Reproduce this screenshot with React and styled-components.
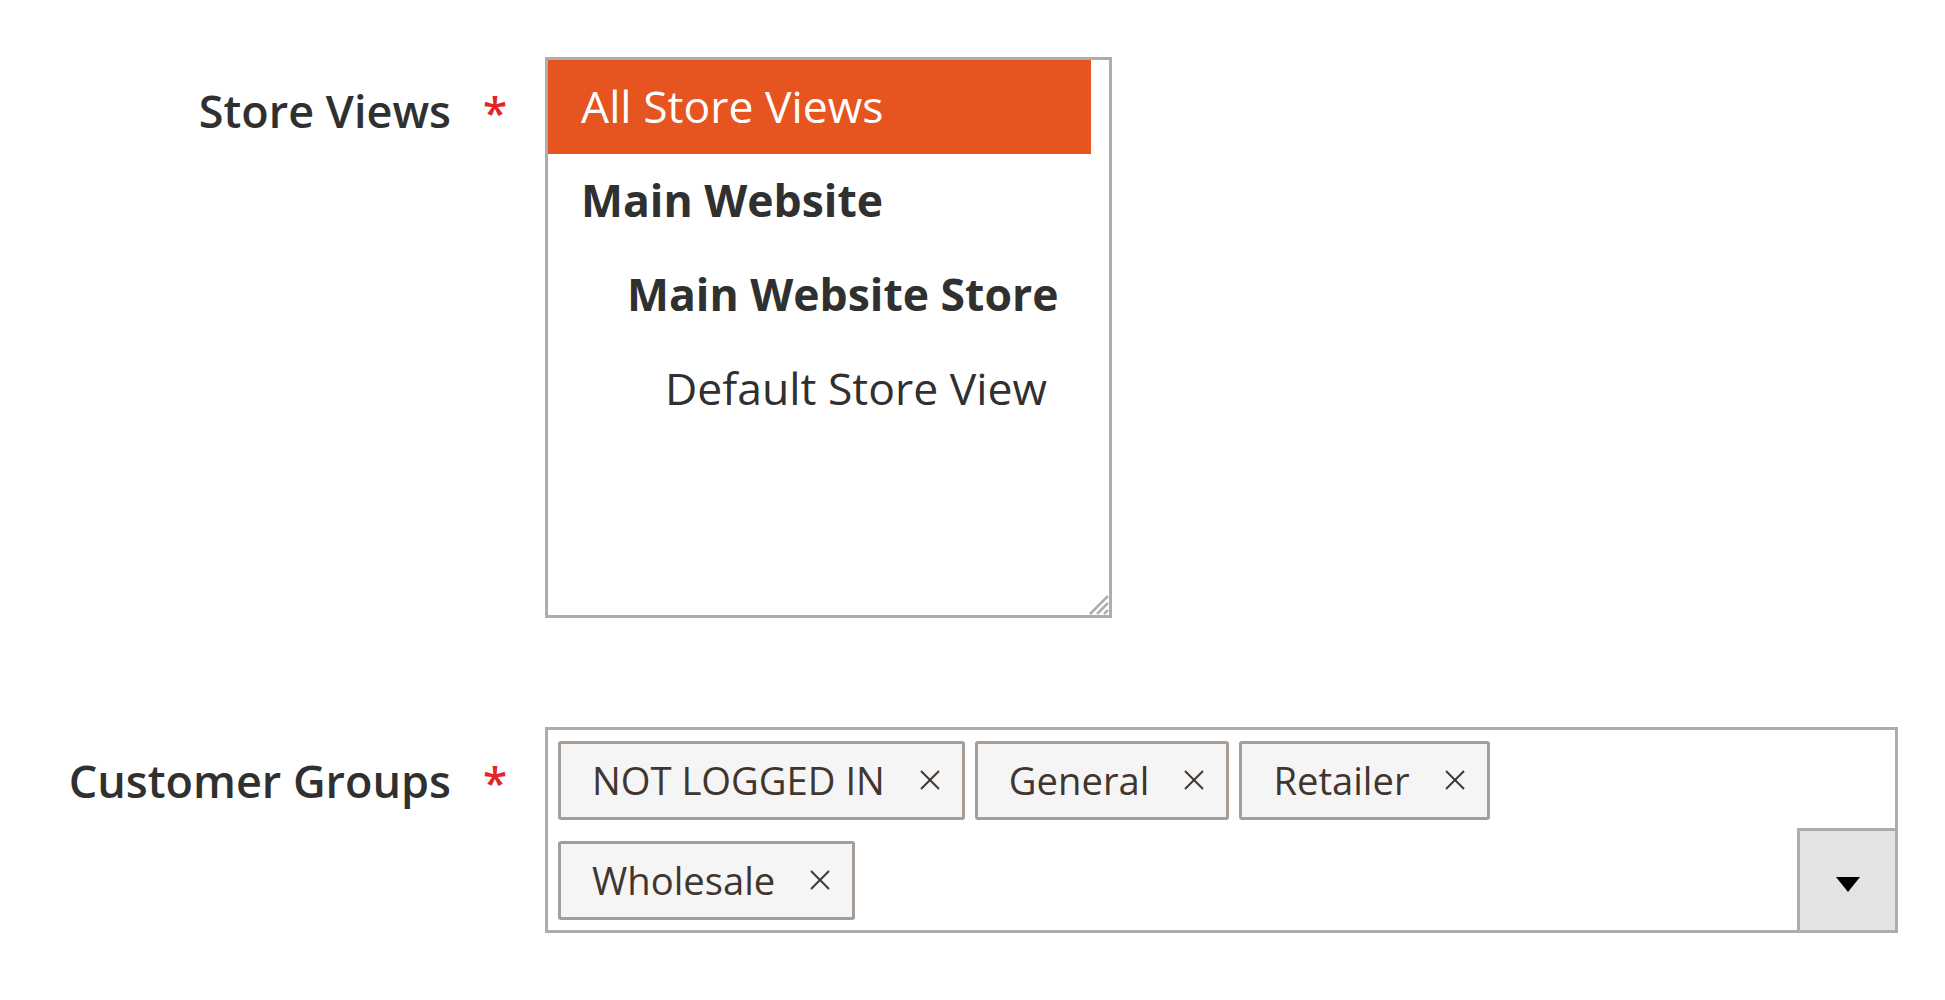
import React from "react";
import styled, { createGlobalStyle } from "styled-components";

const GlobalStyle = createGlobalStyle`
  html, body {
    margin: 0;
    padding: 0;
    background: #fff;
  }
  body {
    font-family: "Open Sans", "Liberation Sans", sans-serif;
    color: #303030;
  }
`;

const storeOptions = [
  { id: 0, label: "All Store Views", indent: 0, weight: 400, selected: true },
  { id: 1, label: "Main Website", indent: 0, weight: 700 },
  { id: 2, label: "Main Website Store", indent: 46, weight: 700 },
  { id: 3, label: "Default Store View", indent: 84, weight: 400 },
];

const groups = ["NOT LOGGED IN", "General", "Retailer", "Wholesale"];

export default function App() {
  return (
    <>
      <GlobalStyle />
      <Form>
        <Field>
          <Label>Store Views</Label>
          <Required>*</Required>
          <Control>
            <ListBox>
              {storeOptions.map((opt) => (
                <Option
                  key={opt.id}
                  $indent={opt.indent}
                  $weight={opt.weight}
                  $selected={opt.selected}
                >
                  {opt.label}
                </Option>
              ))}
              <ResizeHandle viewBox="0 0 22 22">
                <line x1="21" y1="3" x2="3" y2="21" />
                <line x1="21" y1="10" x2="10" y2="21" />
                <line x1="21" y1="17" x2="17" y2="21" />
              </ResizeHandle>
            </ListBox>
          </Control>
        </Field>

        <Field $spaced>
          <Label>Customer Groups</Label>
          <Required>*</Required>
          <Control>
            <MultiSelect>
              {groups.map((g) => (
                <Crumb key={g}>
                  <span>{g}</span>
                  <RemoveIcon viewBox="0 0 20 20">
                    <line x1="1" y1="1" x2="19" y2="19" />
                    <line x1="19" y1="1" x2="1" y2="19" />
                  </RemoveIcon>
                </Crumb>
              ))}
              <Toggle>
                <Caret />
              </Toggle>
            </MultiSelect>
          </Control>
        </Field>
      </Form>
    </>
  );
}

const Form = styled.div`
  padding-top: 57px;
`;

const Field = styled.div`
  display: flex;
  align-items: flex-start;
  margin-top: ${(p) => (p.$spaced ? "109px" : "0")};
`;

const Label = styled.div`
  width: 451px;
  flex-shrink: 0;
  text-align: right;
  font-size: 45px;
  font-weight: 600;
  line-height: 60px;
  padding-top: 24px;
  color: #303030;
  white-space: nowrap;
`;

const Required = styled.div`
  width: 24px;
  margin-left: 32px;
  font-size: 44px;
  font-weight: 600;
  line-height: 60px;
  padding-top: 25px;
  color: #e22626;
`;

const Control = styled.div`
  margin-left: 38px;
`;

const ListBox = styled.div`
  position: relative;
  box-sizing: border-box;
  width: 567px;
  height: 561px;
  border: 3px solid #adadad;
  padding-right: 18px;
  background: #fff;
`;

const Option = styled.div`
  height: 94px;
  line-height: 91px;
  font-size: 44.5px;
  padding-left: ${(p) => 33 + p.$indent}px;
  font-weight: ${(p) => p.$weight};
  color: ${(p) => (p.$selected ? "#fff" : "#303030")};
  background: ${(p) => (p.$selected ? "#e6541f" : "transparent")};
  white-space: nowrap;
`;

const ResizeHandle = styled.svg`
  position: absolute;
  right: 0;
  bottom: 0;
  width: 22px;
  height: 22px;
  stroke: #adadad;
  stroke-width: 2.5;
`;

const MultiSelect = styled.div`
  position: relative;
  box-sizing: border-box;
  width: 1353px;
  height: 206px;
  border: 3px solid #adadad;
  padding: 11px 110px 0 10px;
  display: flex;
  flex-wrap: wrap;
  align-content: flex-start;
  column-gap: 10px;
  row-gap: 21px;
  background: #fff;
`;

const Crumb = styled.div`
  box-sizing: border-box;
  height: 79px;
  display: flex;
  align-items: center;
  gap: 35px;
  padding: 0 22px 2px 31px;
  border: 3px solid #a79d95;
  border-radius: 3px;
  background: #f5f5f5;
  color: #41362f;
  font-size: 38.2px;
  white-space: nowrap;
`;

const RemoveIcon = styled.svg`
  width: 20px;
  height: 20px;
  stroke: #41362f;
  stroke-width: 2;
  flex-shrink: 0;
`;

const Toggle = styled.div`
  position: absolute;
  right: -3px;
  bottom: -3px;
  box-sizing: border-box;
  width: 101px;
  height: 105px;
  border: 3px solid #adadad;
  background: #e3e3e3;
  display: flex;
  align-items: center;
  justify-content: center;
  padding-top: 8px;
`;

const Caret = styled.div`
  width: 0;
  height: 0;
  border-left: 12px solid transparent;
  border-right: 12px solid transparent;
  border-top: 15px solid #000;
`;
